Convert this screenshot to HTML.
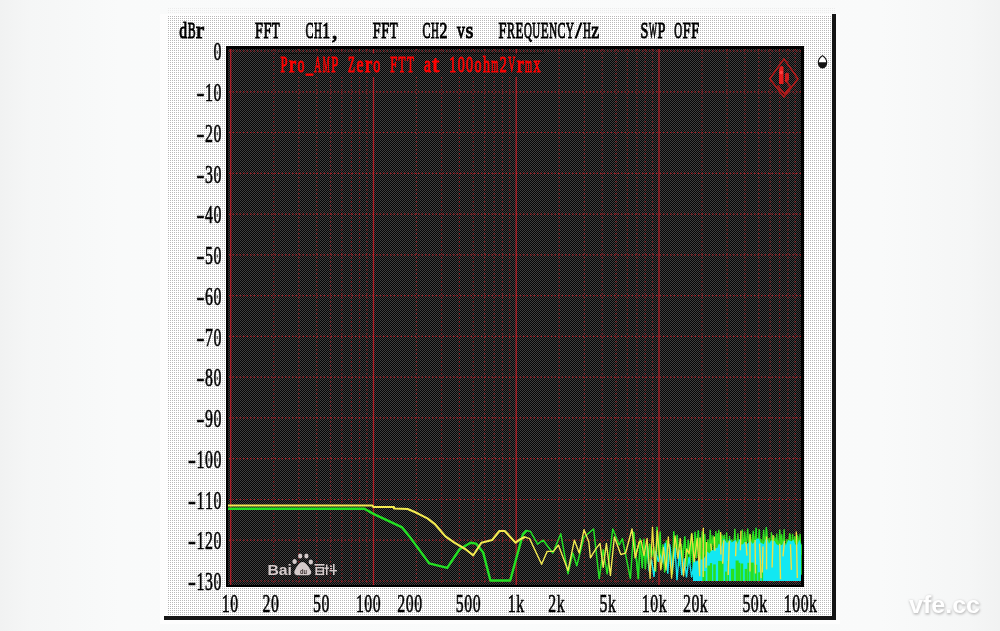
<!DOCTYPE html>
<html><head><meta charset="utf-8"><style>
html,body{margin:0;padding:0;width:1000px;height:631px;overflow:hidden;background:#f6f7f7}
.gh{stroke:#e01c28;stroke-width:1.2;stroke-dasharray:1.5 2;opacity:.7}
.gM{stroke:#e01c28;stroke-width:1.3;opacity:.75}
.gm{stroke:#e01c28;stroke-width:1.2;stroke-dasharray:1.5 2.5;opacity:.55}
.t{position:absolute;font-family:"Liberation Mono",monospace;font-weight:bold;color:#000;white-space:pre;line-height:1}
</style></head>
<body>
<svg width="1000" height="631" viewBox="0 0 1000 631" style="position:absolute;left:0;top:0">
<defs>
<pattern id="dots" width="2" height="2" patternUnits="userSpaceOnUse"><rect x="0" y="0" width="2" height="2" fill="#ffffff"/><rect x="0" y="0" width="1" height="1" fill="#b8b8b8"/></pattern>
<pattern id="dotsl" width="2" height="2" patternUnits="userSpaceOnUse"><rect x="0" y="0" width="2" height="2" fill="#fafbfb"/><rect x="0" y="0" width="1" height="1" fill="#ebebeb"/></pattern>
<pattern id="chk" width="2" height="2" patternUnits="userSpaceOnUse"><rect width="2" height="2" fill="#050505"/><rect x="0" y="0" width="1" height="1" fill="#3e3e3e"/><rect x="1" y="1" width="1" height="1" fill="#3e3e3e"/></pattern>
<linearGradient id="bg" x1="0" y1="0" x2="1" y2="0"><stop offset="0" stop-color="#f1f2f2"/><stop offset="0.03" stop-color="#f5f6f6"/><stop offset="0.12" stop-color="#f9fafa"/><stop offset="0.5" stop-color="#fafbfb"/><stop offset="0.88" stop-color="#f9fafa"/><stop offset="0.97" stop-color="#f5f6f6"/><stop offset="1" stop-color="#f1f2f2"/></linearGradient>
</defs>
<rect width="1000" height="631" fill="url(#bg)"/>
<rect x="160" y="14" width="680" height="610" fill="#fdfdfd"/>
<rect x="168" y="8" width="668" height="6" fill="url(#dotsl)"/>
<rect x="168" y="15" width="664" height="601" fill="url(#dots)" shape-rendering="crispEdges"/>
<rect x="832" y="14" width="4" height="606" fill="#161616"/>
<rect x="164" y="616" width="672" height="4" fill="#161616"/>
<rect x="226" y="46" width="578" height="541" fill="#000"/>
<rect x="228" y="49" width="573" height="536" fill="url(#chk)" shape-rendering="crispEdges"/>
<g class="grid"><line x1="229" y1="51.0" x2="802" y2="51.0" class="gh"/><line x1="229" y1="91.8" x2="802" y2="91.8" class="gh"/><line x1="229" y1="132.5" x2="802" y2="132.5" class="gh"/><line x1="229" y1="173.3" x2="802" y2="173.3" class="gh"/><line x1="229" y1="214.1" x2="802" y2="214.1" class="gh"/><line x1="229" y1="254.9" x2="802" y2="254.9" class="gh"/><line x1="229" y1="295.6" x2="802" y2="295.6" class="gh"/><line x1="229" y1="336.4" x2="802" y2="336.4" class="gh"/><line x1="229" y1="377.2" x2="802" y2="377.2" class="gh"/><line x1="229" y1="417.9" x2="802" y2="417.9" class="gh"/><line x1="229" y1="458.7" x2="802" y2="458.7" class="gh"/><line x1="229" y1="499.5" x2="802" y2="499.5" class="gh"/><line x1="229" y1="540.2" x2="802" y2="540.2" class="gh"/><line x1="229" y1="581.0" x2="802" y2="581.0" class="gh"/><line x1="230.7" y1="49" x2="230.7" y2="585" class="gM"/><line x1="273.7" y1="49" x2="273.7" y2="585" class="gm"/><line x1="298.8" y1="49" x2="298.8" y2="585" class="gm"/><line x1="316.7" y1="49" x2="316.7" y2="585" class="gm"/><line x1="330.5" y1="49" x2="330.5" y2="585" class="gm"/><line x1="341.8" y1="49" x2="341.8" y2="585" class="gm"/><line x1="351.4" y1="49" x2="351.4" y2="585" class="gm"/><line x1="359.6" y1="49" x2="359.6" y2="585" class="gm"/><line x1="366.9" y1="49" x2="366.9" y2="585" class="gm"/><line x1="373.5" y1="49" x2="373.5" y2="585" class="gM"/><line x1="416.4" y1="49" x2="416.4" y2="585" class="gm"/><line x1="441.6" y1="49" x2="441.6" y2="585" class="gm"/><line x1="459.4" y1="49" x2="459.4" y2="585" class="gm"/><line x1="473.3" y1="49" x2="473.3" y2="585" class="gm"/><line x1="484.6" y1="49" x2="484.6" y2="585" class="gm"/><line x1="494.1" y1="49" x2="494.1" y2="585" class="gm"/><line x1="502.4" y1="49" x2="502.4" y2="585" class="gm"/><line x1="509.7" y1="49" x2="509.7" y2="585" class="gm"/><line x1="516.2" y1="49" x2="516.2" y2="585" class="gM"/><line x1="559.2" y1="49" x2="559.2" y2="585" class="gm"/><line x1="584.4" y1="49" x2="584.4" y2="585" class="gm"/><line x1="602.2" y1="49" x2="602.2" y2="585" class="gm"/><line x1="616.0" y1="49" x2="616.0" y2="585" class="gm"/><line x1="627.3" y1="49" x2="627.3" y2="585" class="gm"/><line x1="636.9" y1="49" x2="636.9" y2="585" class="gm"/><line x1="645.2" y1="49" x2="645.2" y2="585" class="gm"/><line x1="652.5" y1="49" x2="652.5" y2="585" class="gm"/><line x1="659.0" y1="49" x2="659.0" y2="585" class="gM"/><line x1="702.0" y1="49" x2="702.0" y2="585" class="gm"/><line x1="727.1" y1="49" x2="727.1" y2="585" class="gm"/><line x1="745.0" y1="49" x2="745.0" y2="585" class="gm"/><line x1="758.8" y1="49" x2="758.8" y2="585" class="gm"/><line x1="770.1" y1="49" x2="770.1" y2="585" class="gm"/><line x1="779.7" y1="49" x2="779.7" y2="585" class="gm"/><line x1="787.9" y1="49" x2="787.9" y2="585" class="gm"/><line x1="795.2" y1="49" x2="795.2" y2="585" class="gm"/></g>
<rect x="278" y="53.5" width="267" height="23.5" fill="#000"/><rect x="278" y="54" width="267" height="23" fill="url(#chk)" shape-rendering="crispEdges"/>
<polyline points="228.0,508.7 364.4,508.7 373.4,513.9 402.2,527.4 409.4,536.4 429.2,563.4 447.2,567.9 459.8,549.0 470.6,542.7 476.0,543.6 483.2,552.6 490.4,580.5 510.2,580.5 522.8,534.6 526.4,530.6" fill="none" stroke="#22e022" stroke-width="2.4" stroke-linejoin="round"/>
<polyline points="522.8,534.6 526.4,530.6 530.4,531.4 537.6,544.2 543.2,540.2 552.8,553.0 560.8,533.8 568.0,573.8 572.8,553.0 576.8,565.8 584.0,537.0 593.6,529.0 599.2,578.6 603.2,549.8 607.2,573.8 612.8,529.0 619.2,545.0 622.4,538.6 630.4,578.6 633.6,532.2 638.4,578.6" fill="none" stroke="#22e022" stroke-width="1.5" stroke-linejoin="round"/>
<polyline points="633.6,532.2 638.4,578.6 640.1,538.8 642.2,567.6 643.9,539.3 645.3,568.8 647.1,543.7 648.4,563.6 649.7,544.0 651.6,557.0 653.8,547.3 655.6,571.4 657.0,527.3 658.7,557.5 660.1,532.1 661.3,567.6 663.0,544.7 664.7,572.0 666.4,540.9 668.0,563.0 670.2,547.9 672.3,573.7 673.8,531.8 675.3,557.8 677.2,535.4 679.3,565.7 681.4,544.8 682.6,561.2 684.8,536.9 686.9,565.9 688.2,540.2 690.2,562.7 691.5,534.0 693.6,575.0 695.0,532.2 696.3,557.5 698.3,530.7 700.0,567.2 701.4,542.4 702.7,572.1 704.1,535.8 705.5,562.7 707.6,543.9 709.1,578.1 710.6,535.3 712.6,572.0 713.9,547.8 715.3,562.5 717.3,533.9 718.8,557.8 720.1,539.2 721.5,571.0 723.1,536.5 725.3,568.1 727.0,545.2 728.4,559.9 730.5,544.2 732.0,560.7 733.9,546.7 735.3,579.8 737.4,539.7 739.0,558.6 740.3,547.2 741.7,573.6 743.1,544.3 744.9,563.3 746.3,542.1 747.6,561.7 749.3,544.9 751.2,563.0 753.3,531.3 754.5,562.7 756.1,528.3 757.5,565.2 759.3,529.8 760.9,578.3 763.0,540.8 764.9,570.6 766.3,527.7 767.5,578.8 769.4,547.2 770.6,571.9 772.3,542.3 773.8,581.0 775.1,538.5 777.0,578.5 779.0,541.8 780.9,578.9 782.5,541.4 784.6,577.8 786.2,543.6 788.3,570.3 790.1,535.0 791.9,571.2 793.2,540.4 795.4,578.0 797.3,535.2 799.2,570.5 800.9,544.6 801.0,574.8" fill="none" stroke="#22e022" stroke-width="1.6" stroke-linejoin="round"/>
<polyline points="646.9,540.4 649.2,571.4 651.5,559.3 654.0,576.9 655.6,550.9 658.3,561.8 659.9,554.7 662.8,561.8 665.2,542.9 667.8,573.6 669.7,544.4 672.4,571.0 675.0,547.9 677.0,580.3 679.5,549.9 681.8,575.1 684.4,558.3 686.5,577.4 689.0,557.1 691.7,577.5 694.5,559.2 697.0,571.0 699.6,556.0 700.0,568.8" fill="none" stroke="#10e8f0" stroke-width="1.4"/>
<polyline points="691.8,534.0 693.4,549.2 695.1,538.1 696.3,546.8 697.6,534.2 699.2,550.9 700.1,537.5 701.1,554.0 702.2,531.4 703.8,547.4 704.8,533.7 706.3,554.4 707.9,539.3 709.2,555.5 710.2,529.9 711.6,548.9 713.1,535.3 714.5,554.4 715.9,531.1 717.1,554.5 718.8,529.7 720.5,555.7 721.9,534.4 723.0,551.4 724.3,534.9 725.2,555.7 726.6,532.2 728.2,551.6 729.6,536.0 730.5,551.4 731.8,539.4 733.5,548.7 734.9,528.7 736.1,554.2 737.9,533.2 739.0,547.9 740.5,539.0 741.5,553.8 742.4,529.5 743.5,552.9 744.7,531.6 746.2,547.0 747.7,528.6 749.1,548.5 750.2,533.9 751.5,549.8 752.7,533.9 753.8,548.0 755.3,535.3 756.6,554.5 758.1,538.1 759.2,553.4 760.8,538.7 762.0,549.1 763.7,529.8 765.5,554.9 766.6,530.1 768.1,548.6 769.1,537.8 770.4,553.9 771.4,532.2 772.9,546.2 774.0,535.9 775.7,555.7 776.7,533.6 778.3,551.0 779.8,529.5 780.8,547.1 781.7,534.2 783.1,551.7 784.1,529.4 785.2,554.4 787.0,539.0 788.0,546.6 789.7,533.0 791.3,549.3 792.6,533.7 793.9,552.0 794.8,536.1 796.5,547.8 797.8,536.6 799.1,548.0 800.1,533.7 801.0,554.9 801.0,545.0" fill="none" stroke="#30e020" stroke-width="1.3"/>
<polygon points="693.0,581.0 693.0,566.0 694.3,563.2 695.6,561.8 697.8,560.3 699.3,559.7 701.1,559.4 703.1,559.3 705.6,556.1 707.1,551.4 709.6,553.6 711.7,549.4 713.3,550.4 715.2,548.3 717.3,548.0 718.8,543.2 721.4,546.4 723.8,538.3 725.1,540.2 726.9,543.0 728.2,542.3 729.5,538.7 731.7,542.4 733.8,541.0 735.6,539.7 737.3,544.0 739.7,538.6 741.0,544.5 743.1,544.2 744.6,541.4 746.2,544.5 747.9,543.2 750.5,540.6 752.4,544.0 754.9,541.4 756.7,538.8 759.1,538.6 760.4,542.5 762.3,543.5 763.9,544.2 765.2,539.7 767.3,538.7 769.0,543.8 771.1,540.3 772.5,540.9 774.7,540.9 776.1,543.7 778.1,545.3 780.6,545.3 782.4,544.4 784.1,540.5 785.8,545.5 788.3,540.0 790.0,540.9 791.7,541.2 793.4,539.6 795.4,544.4 797.4,544.7 799.4,539.4 801.0,545.0 801.0,581.0" fill="#12e8f2"/>

<rect x="702.4" y="571.1" width="3.3" height="9.9" fill="#28e020"/><rect x="707.4" y="565.6" width="3.3" height="15.4" fill="#28e020"/><rect x="709.9" y="563.1" width="2.2" height="17.9" fill="#28e020"/><rect x="713.2" y="564.4" width="2.6" height="16.6" fill="#28e020"/><rect x="718.1" y="560.9" width="3.4" height="20.1" fill="#28e020"/><rect x="721.0" y="561.7" width="2.5" height="19.3" fill="#28e020"/><rect x="725.0" y="571.6" width="1.9" height="9.4" fill="#28e020"/><rect x="727.5" y="560.9" width="1.6" height="20.1" fill="#28e020"/><rect x="730.9" y="568.8" width="3.4" height="12.2" fill="#28e020"/><rect x="735.6" y="560.5" width="3.1" height="20.5" fill="#28e020"/><rect x="737.9" y="562.8" width="2.3" height="18.2" fill="#28e020"/><rect x="740.6" y="563.5" width="2.6" height="17.5" fill="#28e020"/><rect x="744.7" y="568.9" width="2.5" height="12.1" fill="#28e020"/><rect x="747.4" y="562.8" width="2.0" height="18.2" fill="#28e020"/><rect x="750.3" y="562.6" width="3.5" height="18.4" fill="#28e020"/><rect x="754.5" y="564.7" width="2.8" height="16.3" fill="#28e020"/><rect x="758.2" y="572.3" width="2.0" height="8.7" fill="#28e020"/><rect x="761.6" y="563.9" width="1.5" height="17.1" fill="#28e020"/>
<polyline points="228.0,505.5 372.5,505.5 373.4,507.0 394.0,507.0 394.0,508.5 407.6,509.0 414.8,512.0 427.4,518.4 434.6,523.8 445.4,536.4 454.4,542.7 465.2,549.0 473.3,555.3 481.4,542.7 492.2,540.0 499.4,531.0 504.8,531.0 515.6,542.7 520.0,539.4 524.8,537.0" fill="none" stroke="#f2ea50" stroke-width="2.1" stroke-linejoin="round"/>
<polyline points="520.0,539.4 524.8,537.0 529.6,538.6 541.6,564.2 547.2,551.4 553.6,551.4 558.4,545.0 568.0,570.6 574.4,540.2 579.2,553.0 584.0,529.8 588.8,541.8 590.4,557.8 595.2,549.8 600.0,543.4 603.2,567.4 606.4,543.4 610.4,575.4 614.4,537.0 620.8,554.6 625.6,553.0 632.0,529.0 635.2,557.8 639.2,541.8" fill="none" stroke="#f2ea50" stroke-width="1.4" stroke-linejoin="round"/>
<polyline points="635.2,557.8 639.2,541.8 641.2,540.8 644.0,555.6 647.1,538.4 650.1,578.4 652.5,527.3 655.0,570.4 657.3,530.9 660.8,569.8 663.5,547.5 666.0,570.0 668.3,536.9 671.6,578.2 675.0,535.8 678.0,558.4 680.2,538.4 683.5,576.0 686.7,548.9 689.1,553.6 691.8,533.3 694.2,561.7 697.2,538.4 699.7,575.7 700.0,537.4" fill="none" stroke="#f0e040" stroke-width="1.3" stroke-linejoin="round"/>
<line x1="703.3" y1="527.7" x2="703.2" y2="577.1" stroke="#f0e040" stroke-width="1.4"/><line x1="706.5" y1="541.9" x2="706.1" y2="567.7" stroke="#f0e040" stroke-width="1.4"/><line x1="710.7" y1="543.6" x2="711.6" y2="550.6" stroke="#f0e040" stroke-width="1.4"/><line x1="714.2" y1="536.6" x2="714.9" y2="550.8" stroke="#f0e040" stroke-width="1.4"/><line x1="720.6" y1="532.0" x2="720.9" y2="554.4" stroke="#f0e040" stroke-width="1.4"/><line x1="723.8" y1="540.2" x2="722.7" y2="563.8" stroke="#f0e040" stroke-width="1.4"/><line x1="729.3" y1="540.8" x2="728.2" y2="575.0" stroke="#f0e040" stroke-width="1.4"/><line x1="736.1" y1="541.4" x2="735.6" y2="556.2" stroke="#f0e040" stroke-width="1.4"/><line x1="741.0" y1="530.8" x2="740.3" y2="550.3" stroke="#f0e040" stroke-width="1.4"/><line x1="745.9" y1="542.0" x2="747.0" y2="555.6" stroke="#f0e040" stroke-width="1.4"/><line x1="750.0" y1="534.3" x2="750.0" y2="571.6" stroke="#f0e040" stroke-width="1.4"/><line x1="755.1" y1="539.9" x2="755.5" y2="573.4" stroke="#f0e040" stroke-width="1.4"/><line x1="759.6" y1="543.6" x2="761.1" y2="578.1" stroke="#f0e040" stroke-width="1.4"/><line x1="763.0" y1="546.6" x2="762.3" y2="572.4" stroke="#f0e040" stroke-width="1.4"/><line x1="766.5" y1="536.5" x2="766.6" y2="569.4" stroke="#f0e040" stroke-width="1.4"/><line x1="773.1" y1="534.9" x2="772.1" y2="567.6" stroke="#f0e040" stroke-width="1.4"/><line x1="779.7" y1="543.7" x2="780.5" y2="579.3" stroke="#f0e040" stroke-width="1.4"/><line x1="784.5" y1="540.7" x2="783.0" y2="556.4" stroke="#f0e040" stroke-width="1.4"/><line x1="790.4" y1="544.2" x2="791.4" y2="569.9" stroke="#f0e040" stroke-width="1.4"/><line x1="796.3" y1="531.5" x2="797.3" y2="577.9" stroke="#f0e040" stroke-width="1.4"/>
</svg>
<svg width="1000" height="631" style="position:absolute;left:0;top:0;will-change:transform" font-family="Liberation Serif" font-size="23" font-weight="bold"><defs><filter id="blur1" x="-20%" y="-20%" width="140%" height="140%"><feGaussianBlur stdDeviation="1.2"/></filter></defs>
<text x="179.20" y="38.30" textLength="7.90" lengthAdjust="spacingAndGlyphs" fill="#000" stroke="#000" stroke-width="1.0" font-weight="normal" font-size="23.5">d</text><text x="187.63" y="38.30" textLength="7.90" lengthAdjust="spacingAndGlyphs" fill="#000" stroke="#000" stroke-width="1.0" font-weight="normal" font-size="23.5">B</text><text x="196.06" y="38.30" textLength="7.90" lengthAdjust="spacingAndGlyphs" fill="#000" stroke="#000" stroke-width="1.0" font-weight="normal" font-size="23.5">r</text><text x="255.00" y="38.30" textLength="7.90" lengthAdjust="spacingAndGlyphs" fill="#000" stroke="#000" stroke-width="1.0" font-weight="normal" font-size="23.5">F</text><text x="263.43" y="38.30" textLength="7.90" lengthAdjust="spacingAndGlyphs" fill="#000" stroke="#000" stroke-width="1.0" font-weight="normal" font-size="23.5">F</text><text x="271.86" y="38.30" textLength="7.90" lengthAdjust="spacingAndGlyphs" fill="#000" stroke="#000" stroke-width="1.0" font-weight="normal" font-size="23.5">T</text><text x="305.50" y="38.30" textLength="7.90" lengthAdjust="spacingAndGlyphs" fill="#000" stroke="#000" stroke-width="1.0" font-weight="normal" font-size="23.5">C</text><text x="313.93" y="38.30" textLength="7.90" lengthAdjust="spacingAndGlyphs" fill="#000" stroke="#000" stroke-width="1.0" font-weight="normal" font-size="23.5">H</text><text x="322.36" y="38.30" textLength="7.90" lengthAdjust="spacingAndGlyphs" fill="#000" stroke="#000" stroke-width="1.0" font-weight="normal" font-size="23.5">1</text><text x="331.80" y="38.30" textLength="5.88" lengthAdjust="spacingAndGlyphs" fill="#000" stroke="#000" stroke-width="1.0" font-weight="normal" font-size="23.5">,</text><text x="372.80" y="38.30" textLength="7.90" lengthAdjust="spacingAndGlyphs" fill="#000" stroke="#000" stroke-width="1.0" font-weight="normal" font-size="23.5">F</text><text x="381.23" y="38.30" textLength="7.90" lengthAdjust="spacingAndGlyphs" fill="#000" stroke="#000" stroke-width="1.0" font-weight="normal" font-size="23.5">F</text><text x="389.66" y="38.30" textLength="7.90" lengthAdjust="spacingAndGlyphs" fill="#000" stroke="#000" stroke-width="1.0" font-weight="normal" font-size="23.5">T</text><text x="422.60" y="38.30" textLength="7.90" lengthAdjust="spacingAndGlyphs" fill="#000" stroke="#000" stroke-width="1.0" font-weight="normal" font-size="23.5">C</text><text x="431.03" y="38.30" textLength="7.90" lengthAdjust="spacingAndGlyphs" fill="#000" stroke="#000" stroke-width="1.0" font-weight="normal" font-size="23.5">H</text><text x="439.46" y="38.30" textLength="7.90" lengthAdjust="spacingAndGlyphs" fill="#000" stroke="#000" stroke-width="1.0" font-weight="normal" font-size="23.5">2</text><text x="457.00" y="38.30" textLength="7.90" lengthAdjust="spacingAndGlyphs" fill="#000" stroke="#000" stroke-width="1.0" font-weight="normal" font-size="23.5">v</text><text x="465.43" y="38.30" textLength="7.90" lengthAdjust="spacingAndGlyphs" fill="#000" stroke="#000" stroke-width="1.0" font-weight="normal" font-size="23.5">s</text><text x="498.60" y="38.30" textLength="7.90" lengthAdjust="spacingAndGlyphs" fill="#000" stroke="#000" stroke-width="1.0" font-weight="normal" font-size="23.5">F</text><text x="507.03" y="38.30" textLength="7.90" lengthAdjust="spacingAndGlyphs" fill="#000" stroke="#000" stroke-width="1.0" font-weight="normal" font-size="23.5">R</text><text x="515.46" y="38.30" textLength="7.90" lengthAdjust="spacingAndGlyphs" fill="#000" stroke="#000" stroke-width="1.0" font-weight="normal" font-size="23.5">E</text><text x="523.89" y="38.30" textLength="7.90" lengthAdjust="spacingAndGlyphs" fill="#000" stroke="#000" stroke-width="1.0" font-weight="normal" font-size="23.5">Q</text><text x="532.32" y="38.30" textLength="7.90" lengthAdjust="spacingAndGlyphs" fill="#000" stroke="#000" stroke-width="1.0" font-weight="normal" font-size="23.5">U</text><text x="540.75" y="38.30" textLength="7.90" lengthAdjust="spacingAndGlyphs" fill="#000" stroke="#000" stroke-width="1.0" font-weight="normal" font-size="23.5">E</text><text x="549.18" y="38.30" textLength="7.90" lengthAdjust="spacingAndGlyphs" fill="#000" stroke="#000" stroke-width="1.0" font-weight="normal" font-size="23.5">N</text><text x="557.61" y="38.30" textLength="7.90" lengthAdjust="spacingAndGlyphs" fill="#000" stroke="#000" stroke-width="1.0" font-weight="normal" font-size="23.5">C</text><text x="566.04" y="38.30" textLength="7.90" lengthAdjust="spacingAndGlyphs" fill="#000" stroke="#000" stroke-width="1.0" font-weight="normal" font-size="23.5">Y</text><text x="575.16" y="38.30" textLength="6.53" lengthAdjust="spacingAndGlyphs" fill="#000" stroke="#000" stroke-width="1.0" font-weight="normal" font-size="23.5">/</text><text x="582.90" y="38.30" textLength="7.90" lengthAdjust="spacingAndGlyphs" fill="#000" stroke="#000" stroke-width="1.0" font-weight="normal" font-size="23.5">H</text><text x="591.33" y="38.30" textLength="7.90" lengthAdjust="spacingAndGlyphs" fill="#000" stroke="#000" stroke-width="1.0" font-weight="normal" font-size="23.5">z</text><text x="640.60" y="38.30" textLength="7.90" lengthAdjust="spacingAndGlyphs" fill="#000" stroke="#000" stroke-width="1.0" font-weight="normal" font-size="23.5">S</text><text x="649.03" y="38.30" textLength="7.90" lengthAdjust="spacingAndGlyphs" fill="#000" stroke="#000" stroke-width="1.0" font-weight="normal" font-size="23.5">W</text><text x="657.46" y="38.30" textLength="7.90" lengthAdjust="spacingAndGlyphs" fill="#000" stroke="#000" stroke-width="1.0" font-weight="normal" font-size="23.5">P</text><text x="674.30" y="38.30" textLength="7.90" lengthAdjust="spacingAndGlyphs" fill="#000" stroke="#000" stroke-width="1.0" font-weight="normal" font-size="23.5">O</text><text x="682.73" y="38.30" textLength="7.90" lengthAdjust="spacingAndGlyphs" fill="#000" stroke="#000" stroke-width="1.0" font-weight="normal" font-size="23.5">F</text><text x="691.16" y="38.30" textLength="7.90" lengthAdjust="spacingAndGlyphs" fill="#000" stroke="#000" stroke-width="1.0" font-weight="normal" font-size="23.5">F</text><rect x="216.65" y="50.70" width="1.4" height="3" fill="#000" opacity="0.6"/><text x="213.40" y="60.20" textLength="7.90" lengthAdjust="spacingAndGlyphs" fill="#000" stroke="#000" stroke-width="0.6" font-weight="normal" font-size="24.5">0</text><text x="196.54" y="100.97" textLength="7.90" lengthAdjust="spacingAndGlyphs" fill="#000" stroke="#000" stroke-width="0.6" font-weight="normal" font-size="24.5">-</text><text x="204.97" y="100.97" textLength="7.90" lengthAdjust="spacingAndGlyphs" fill="#000" stroke="#000" stroke-width="0.6" font-weight="normal" font-size="24.5">1</text><rect x="216.65" y="91.47" width="1.4" height="3" fill="#000" opacity="0.6"/><text x="213.40" y="100.97" textLength="7.90" lengthAdjust="spacingAndGlyphs" fill="#000" stroke="#000" stroke-width="0.6" font-weight="normal" font-size="24.5">0</text><text x="196.54" y="141.74" textLength="7.90" lengthAdjust="spacingAndGlyphs" fill="#000" stroke="#000" stroke-width="0.6" font-weight="normal" font-size="24.5">-</text><text x="204.97" y="141.74" textLength="7.90" lengthAdjust="spacingAndGlyphs" fill="#000" stroke="#000" stroke-width="0.6" font-weight="normal" font-size="24.5">2</text><rect x="216.65" y="132.24" width="1.4" height="3" fill="#000" opacity="0.6"/><text x="213.40" y="141.74" textLength="7.90" lengthAdjust="spacingAndGlyphs" fill="#000" stroke="#000" stroke-width="0.6" font-weight="normal" font-size="24.5">0</text><text x="196.54" y="182.51" textLength="7.90" lengthAdjust="spacingAndGlyphs" fill="#000" stroke="#000" stroke-width="0.6" font-weight="normal" font-size="24.5">-</text><text x="204.97" y="182.51" textLength="7.90" lengthAdjust="spacingAndGlyphs" fill="#000" stroke="#000" stroke-width="0.6" font-weight="normal" font-size="24.5">3</text><rect x="216.65" y="173.01" width="1.4" height="3" fill="#000" opacity="0.6"/><text x="213.40" y="182.51" textLength="7.90" lengthAdjust="spacingAndGlyphs" fill="#000" stroke="#000" stroke-width="0.6" font-weight="normal" font-size="24.5">0</text><text x="196.54" y="223.28" textLength="7.90" lengthAdjust="spacingAndGlyphs" fill="#000" stroke="#000" stroke-width="0.6" font-weight="normal" font-size="24.5">-</text><text x="204.97" y="223.28" textLength="7.90" lengthAdjust="spacingAndGlyphs" fill="#000" stroke="#000" stroke-width="0.6" font-weight="normal" font-size="24.5">4</text><rect x="216.65" y="213.78" width="1.4" height="3" fill="#000" opacity="0.6"/><text x="213.40" y="223.28" textLength="7.90" lengthAdjust="spacingAndGlyphs" fill="#000" stroke="#000" stroke-width="0.6" font-weight="normal" font-size="24.5">0</text><text x="196.54" y="264.05" textLength="7.90" lengthAdjust="spacingAndGlyphs" fill="#000" stroke="#000" stroke-width="0.6" font-weight="normal" font-size="24.5">-</text><text x="204.97" y="264.05" textLength="7.90" lengthAdjust="spacingAndGlyphs" fill="#000" stroke="#000" stroke-width="0.6" font-weight="normal" font-size="24.5">5</text><rect x="216.65" y="254.55" width="1.4" height="3" fill="#000" opacity="0.6"/><text x="213.40" y="264.05" textLength="7.90" lengthAdjust="spacingAndGlyphs" fill="#000" stroke="#000" stroke-width="0.6" font-weight="normal" font-size="24.5">0</text><text x="196.54" y="304.82" textLength="7.90" lengthAdjust="spacingAndGlyphs" fill="#000" stroke="#000" stroke-width="0.6" font-weight="normal" font-size="24.5">-</text><text x="204.97" y="304.82" textLength="7.90" lengthAdjust="spacingAndGlyphs" fill="#000" stroke="#000" stroke-width="0.6" font-weight="normal" font-size="24.5">6</text><rect x="216.65" y="295.32" width="1.4" height="3" fill="#000" opacity="0.6"/><text x="213.40" y="304.82" textLength="7.90" lengthAdjust="spacingAndGlyphs" fill="#000" stroke="#000" stroke-width="0.6" font-weight="normal" font-size="24.5">0</text><text x="196.54" y="345.59" textLength="7.90" lengthAdjust="spacingAndGlyphs" fill="#000" stroke="#000" stroke-width="0.6" font-weight="normal" font-size="24.5">-</text><text x="204.97" y="345.59" textLength="7.90" lengthAdjust="spacingAndGlyphs" fill="#000" stroke="#000" stroke-width="0.6" font-weight="normal" font-size="24.5">7</text><rect x="216.65" y="336.09" width="1.4" height="3" fill="#000" opacity="0.6"/><text x="213.40" y="345.59" textLength="7.90" lengthAdjust="spacingAndGlyphs" fill="#000" stroke="#000" stroke-width="0.6" font-weight="normal" font-size="24.5">0</text><text x="196.54" y="386.36" textLength="7.90" lengthAdjust="spacingAndGlyphs" fill="#000" stroke="#000" stroke-width="0.6" font-weight="normal" font-size="24.5">-</text><text x="204.97" y="386.36" textLength="7.90" lengthAdjust="spacingAndGlyphs" fill="#000" stroke="#000" stroke-width="0.6" font-weight="normal" font-size="24.5">8</text><rect x="216.65" y="376.86" width="1.4" height="3" fill="#000" opacity="0.6"/><text x="213.40" y="386.36" textLength="7.90" lengthAdjust="spacingAndGlyphs" fill="#000" stroke="#000" stroke-width="0.6" font-weight="normal" font-size="24.5">0</text><text x="196.54" y="427.13" textLength="7.90" lengthAdjust="spacingAndGlyphs" fill="#000" stroke="#000" stroke-width="0.6" font-weight="normal" font-size="24.5">-</text><text x="204.97" y="427.13" textLength="7.90" lengthAdjust="spacingAndGlyphs" fill="#000" stroke="#000" stroke-width="0.6" font-weight="normal" font-size="24.5">9</text><rect x="216.65" y="417.63" width="1.4" height="3" fill="#000" opacity="0.6"/><text x="213.40" y="427.13" textLength="7.90" lengthAdjust="spacingAndGlyphs" fill="#000" stroke="#000" stroke-width="0.6" font-weight="normal" font-size="24.5">0</text><text x="188.11" y="467.90" textLength="7.90" lengthAdjust="spacingAndGlyphs" fill="#000" stroke="#000" stroke-width="0.6" font-weight="normal" font-size="24.5">-</text><text x="196.54" y="467.90" textLength="7.90" lengthAdjust="spacingAndGlyphs" fill="#000" stroke="#000" stroke-width="0.6" font-weight="normal" font-size="24.5">1</text><rect x="208.22" y="458.40" width="1.4" height="3" fill="#000" opacity="0.6"/><text x="204.97" y="467.90" textLength="7.90" lengthAdjust="spacingAndGlyphs" fill="#000" stroke="#000" stroke-width="0.6" font-weight="normal" font-size="24.5">0</text><rect x="216.65" y="458.40" width="1.4" height="3" fill="#000" opacity="0.6"/><text x="213.40" y="467.90" textLength="7.90" lengthAdjust="spacingAndGlyphs" fill="#000" stroke="#000" stroke-width="0.6" font-weight="normal" font-size="24.5">0</text><text x="188.11" y="508.67" textLength="7.90" lengthAdjust="spacingAndGlyphs" fill="#000" stroke="#000" stroke-width="0.6" font-weight="normal" font-size="24.5">-</text><text x="196.54" y="508.67" textLength="7.90" lengthAdjust="spacingAndGlyphs" fill="#000" stroke="#000" stroke-width="0.6" font-weight="normal" font-size="24.5">1</text><text x="204.97" y="508.67" textLength="7.90" lengthAdjust="spacingAndGlyphs" fill="#000" stroke="#000" stroke-width="0.6" font-weight="normal" font-size="24.5">1</text><rect x="216.65" y="499.17" width="1.4" height="3" fill="#000" opacity="0.6"/><text x="213.40" y="508.67" textLength="7.90" lengthAdjust="spacingAndGlyphs" fill="#000" stroke="#000" stroke-width="0.6" font-weight="normal" font-size="24.5">0</text><text x="188.11" y="549.44" textLength="7.90" lengthAdjust="spacingAndGlyphs" fill="#000" stroke="#000" stroke-width="0.6" font-weight="normal" font-size="24.5">-</text><text x="196.54" y="549.44" textLength="7.90" lengthAdjust="spacingAndGlyphs" fill="#000" stroke="#000" stroke-width="0.6" font-weight="normal" font-size="24.5">1</text><text x="204.97" y="549.44" textLength="7.90" lengthAdjust="spacingAndGlyphs" fill="#000" stroke="#000" stroke-width="0.6" font-weight="normal" font-size="24.5">2</text><rect x="216.65" y="539.94" width="1.4" height="3" fill="#000" opacity="0.6"/><text x="213.40" y="549.44" textLength="7.90" lengthAdjust="spacingAndGlyphs" fill="#000" stroke="#000" stroke-width="0.6" font-weight="normal" font-size="24.5">0</text><text x="188.11" y="590.21" textLength="7.90" lengthAdjust="spacingAndGlyphs" fill="#000" stroke="#000" stroke-width="0.6" font-weight="normal" font-size="24.5">-</text><text x="196.54" y="590.21" textLength="7.90" lengthAdjust="spacingAndGlyphs" fill="#000" stroke="#000" stroke-width="0.6" font-weight="normal" font-size="24.5">1</text><text x="204.97" y="590.21" textLength="7.90" lengthAdjust="spacingAndGlyphs" fill="#000" stroke="#000" stroke-width="0.6" font-weight="normal" font-size="24.5">3</text><rect x="216.65" y="580.71" width="1.4" height="3" fill="#000" opacity="0.6"/><text x="213.40" y="590.21" textLength="7.90" lengthAdjust="spacingAndGlyphs" fill="#000" stroke="#000" stroke-width="0.6" font-weight="normal" font-size="24.5">0</text><text x="221.80" y="611.60" textLength="7.90" lengthAdjust="spacingAndGlyphs" fill="#000" stroke="#000" stroke-width="0.6" font-weight="normal" font-size="24.5">1</text><rect x="233.48" y="602.20" width="1.4" height="3" fill="#000" opacity="0.6"/><text x="230.23" y="611.60" textLength="7.90" lengthAdjust="spacingAndGlyphs" fill="#000" stroke="#000" stroke-width="0.6" font-weight="normal" font-size="24.5">0</text><text x="262.60" y="611.60" textLength="7.90" lengthAdjust="spacingAndGlyphs" fill="#000" stroke="#000" stroke-width="0.6" font-weight="normal" font-size="24.5">2</text><rect x="274.28" y="602.20" width="1.4" height="3" fill="#000" opacity="0.6"/><text x="271.03" y="611.60" textLength="7.90" lengthAdjust="spacingAndGlyphs" fill="#000" stroke="#000" stroke-width="0.6" font-weight="normal" font-size="24.5">0</text><text x="313.00" y="611.60" textLength="7.90" lengthAdjust="spacingAndGlyphs" fill="#000" stroke="#000" stroke-width="0.6" font-weight="normal" font-size="24.5">5</text><rect x="324.68" y="602.20" width="1.4" height="3" fill="#000" opacity="0.6"/><text x="321.43" y="611.60" textLength="7.90" lengthAdjust="spacingAndGlyphs" fill="#000" stroke="#000" stroke-width="0.6" font-weight="normal" font-size="24.5">0</text><text x="355.90" y="611.60" textLength="7.90" lengthAdjust="spacingAndGlyphs" fill="#000" stroke="#000" stroke-width="0.6" font-weight="normal" font-size="24.5">1</text><rect x="367.58" y="602.20" width="1.4" height="3" fill="#000" opacity="0.6"/><text x="364.33" y="611.60" textLength="7.90" lengthAdjust="spacingAndGlyphs" fill="#000" stroke="#000" stroke-width="0.6" font-weight="normal" font-size="24.5">0</text><rect x="376.01" y="602.20" width="1.4" height="3" fill="#000" opacity="0.6"/><text x="372.76" y="611.60" textLength="7.90" lengthAdjust="spacingAndGlyphs" fill="#000" stroke="#000" stroke-width="0.6" font-weight="normal" font-size="24.5">0</text><text x="397.30" y="611.60" textLength="7.90" lengthAdjust="spacingAndGlyphs" fill="#000" stroke="#000" stroke-width="0.6" font-weight="normal" font-size="24.5">2</text><rect x="408.98" y="602.20" width="1.4" height="3" fill="#000" opacity="0.6"/><text x="405.73" y="611.60" textLength="7.90" lengthAdjust="spacingAndGlyphs" fill="#000" stroke="#000" stroke-width="0.6" font-weight="normal" font-size="24.5">0</text><rect x="417.41" y="602.20" width="1.4" height="3" fill="#000" opacity="0.6"/><text x="414.16" y="611.60" textLength="7.90" lengthAdjust="spacingAndGlyphs" fill="#000" stroke="#000" stroke-width="0.6" font-weight="normal" font-size="24.5">0</text><text x="455.80" y="611.60" textLength="7.90" lengthAdjust="spacingAndGlyphs" fill="#000" stroke="#000" stroke-width="0.6" font-weight="normal" font-size="24.5">5</text><rect x="467.48" y="602.20" width="1.4" height="3" fill="#000" opacity="0.6"/><text x="464.23" y="611.60" textLength="7.90" lengthAdjust="spacingAndGlyphs" fill="#000" stroke="#000" stroke-width="0.6" font-weight="normal" font-size="24.5">0</text><rect x="475.91" y="602.20" width="1.4" height="3" fill="#000" opacity="0.6"/><text x="472.66" y="611.60" textLength="7.90" lengthAdjust="spacingAndGlyphs" fill="#000" stroke="#000" stroke-width="0.6" font-weight="normal" font-size="24.5">0</text><text x="507.80" y="611.60" textLength="7.90" lengthAdjust="spacingAndGlyphs" fill="#000" stroke="#000" stroke-width="0.6" font-weight="normal" font-size="24.5">1</text><text x="516.23" y="611.60" textLength="7.90" lengthAdjust="spacingAndGlyphs" fill="#000" stroke="#000" stroke-width="0.6" font-weight="normal" font-size="24.5">k</text><text x="548.20" y="611.60" textLength="7.90" lengthAdjust="spacingAndGlyphs" fill="#000" stroke="#000" stroke-width="0.6" font-weight="normal" font-size="24.5">2</text><text x="556.63" y="611.60" textLength="7.90" lengthAdjust="spacingAndGlyphs" fill="#000" stroke="#000" stroke-width="0.6" font-weight="normal" font-size="24.5">k</text><text x="599.50" y="611.60" textLength="7.90" lengthAdjust="spacingAndGlyphs" fill="#000" stroke="#000" stroke-width="0.6" font-weight="normal" font-size="24.5">5</text><text x="607.93" y="611.60" textLength="7.90" lengthAdjust="spacingAndGlyphs" fill="#000" stroke="#000" stroke-width="0.6" font-weight="normal" font-size="24.5">k</text><text x="641.80" y="611.60" textLength="7.90" lengthAdjust="spacingAndGlyphs" fill="#000" stroke="#000" stroke-width="0.6" font-weight="normal" font-size="24.5">1</text><rect x="653.48" y="602.20" width="1.4" height="3" fill="#000" opacity="0.6"/><text x="650.23" y="611.60" textLength="7.90" lengthAdjust="spacingAndGlyphs" fill="#000" stroke="#000" stroke-width="0.6" font-weight="normal" font-size="24.5">0</text><text x="658.66" y="611.60" textLength="7.90" lengthAdjust="spacingAndGlyphs" fill="#000" stroke="#000" stroke-width="0.6" font-weight="normal" font-size="24.5">k</text><text x="683.00" y="611.60" textLength="7.90" lengthAdjust="spacingAndGlyphs" fill="#000" stroke="#000" stroke-width="0.6" font-weight="normal" font-size="24.5">2</text><rect x="694.68" y="602.20" width="1.4" height="3" fill="#000" opacity="0.6"/><text x="691.43" y="611.60" textLength="7.90" lengthAdjust="spacingAndGlyphs" fill="#000" stroke="#000" stroke-width="0.6" font-weight="normal" font-size="24.5">0</text><text x="699.86" y="611.60" textLength="7.90" lengthAdjust="spacingAndGlyphs" fill="#000" stroke="#000" stroke-width="0.6" font-weight="normal" font-size="24.5">k</text><text x="742.40" y="611.60" textLength="7.90" lengthAdjust="spacingAndGlyphs" fill="#000" stroke="#000" stroke-width="0.6" font-weight="normal" font-size="24.5">5</text><rect x="754.08" y="602.20" width="1.4" height="3" fill="#000" opacity="0.6"/><text x="750.83" y="611.60" textLength="7.90" lengthAdjust="spacingAndGlyphs" fill="#000" stroke="#000" stroke-width="0.6" font-weight="normal" font-size="24.5">0</text><text x="759.26" y="611.60" textLength="7.90" lengthAdjust="spacingAndGlyphs" fill="#000" stroke="#000" stroke-width="0.6" font-weight="normal" font-size="24.5">k</text><text x="783.80" y="611.60" textLength="7.90" lengthAdjust="spacingAndGlyphs" fill="#000" stroke="#000" stroke-width="0.6" font-weight="normal" font-size="24.5">1</text><rect x="795.48" y="602.20" width="1.4" height="3" fill="#000" opacity="0.6"/><text x="792.23" y="611.60" textLength="7.90" lengthAdjust="spacingAndGlyphs" fill="#000" stroke="#000" stroke-width="0.6" font-weight="normal" font-size="24.5">0</text><rect x="803.91" y="602.20" width="1.4" height="3" fill="#000" opacity="0.6"/><text x="800.66" y="611.60" textLength="7.90" lengthAdjust="spacingAndGlyphs" fill="#000" stroke="#000" stroke-width="0.6" font-weight="normal" font-size="24.5">0</text><text x="809.09" y="611.60" textLength="7.90" lengthAdjust="spacingAndGlyphs" fill="#000" stroke="#000" stroke-width="0.6" font-weight="normal" font-size="24.5">k</text><text x="280.60" y="71.50" textLength="7.00" lengthAdjust="spacingAndGlyphs" fill="#ff0000" stroke="#ff0000" stroke-width="1.0" font-weight="normal" font-size="24">P</text><text x="289.03" y="71.50" textLength="7.00" lengthAdjust="spacingAndGlyphs" fill="#ff0000" stroke="#ff0000" stroke-width="1.0" font-weight="normal" font-size="24">r</text><text x="297.46" y="71.50" textLength="7.00" lengthAdjust="spacingAndGlyphs" fill="#ff0000" stroke="#ff0000" stroke-width="1.0" font-weight="normal" font-size="24">o</text><text x="305.89" y="71.50" textLength="7.00" lengthAdjust="spacingAndGlyphs" fill="#ff0000" stroke="#ff0000" stroke-width="1.0" font-weight="normal" font-size="24">_</text><text x="314.32" y="71.50" textLength="7.00" lengthAdjust="spacingAndGlyphs" fill="#ff0000" stroke="#ff0000" stroke-width="1.0" font-weight="normal" font-size="24">A</text><text x="322.75" y="71.50" textLength="7.00" lengthAdjust="spacingAndGlyphs" fill="#ff0000" stroke="#ff0000" stroke-width="1.0" font-weight="normal" font-size="24">M</text><text x="331.18" y="71.50" textLength="7.00" lengthAdjust="spacingAndGlyphs" fill="#ff0000" stroke="#ff0000" stroke-width="1.0" font-weight="normal" font-size="24">P</text><text x="348.04" y="71.50" textLength="7.00" lengthAdjust="spacingAndGlyphs" fill="#ff0000" stroke="#ff0000" stroke-width="1.0" font-weight="normal" font-size="24">Z</text><text x="356.47" y="71.50" textLength="7.00" lengthAdjust="spacingAndGlyphs" fill="#ff0000" stroke="#ff0000" stroke-width="1.0" font-weight="normal" font-size="24">e</text><text x="364.90" y="71.50" textLength="7.00" lengthAdjust="spacingAndGlyphs" fill="#ff0000" stroke="#ff0000" stroke-width="1.0" font-weight="normal" font-size="24">r</text><text x="373.33" y="71.50" textLength="7.00" lengthAdjust="spacingAndGlyphs" fill="#ff0000" stroke="#ff0000" stroke-width="1.0" font-weight="normal" font-size="24">o</text><text x="390.19" y="71.50" textLength="7.00" lengthAdjust="spacingAndGlyphs" fill="#ff0000" stroke="#ff0000" stroke-width="1.0" font-weight="normal" font-size="24">F</text><text x="398.62" y="71.50" textLength="7.00" lengthAdjust="spacingAndGlyphs" fill="#ff0000" stroke="#ff0000" stroke-width="1.0" font-weight="normal" font-size="24">T</text><text x="407.05" y="71.50" textLength="7.00" lengthAdjust="spacingAndGlyphs" fill="#ff0000" stroke="#ff0000" stroke-width="1.0" font-weight="normal" font-size="24">T</text><text x="423.91" y="71.50" textLength="7.00" lengthAdjust="spacingAndGlyphs" fill="#ff0000" stroke="#ff0000" stroke-width="1.0" font-weight="normal" font-size="24">a</text><text x="432.34" y="71.50" textLength="7.00" lengthAdjust="spacingAndGlyphs" fill="#ff0000" stroke="#ff0000" stroke-width="1.0" font-weight="normal" font-size="24">t</text><text x="449.20" y="71.50" textLength="7.00" lengthAdjust="spacingAndGlyphs" fill="#ff0000" stroke="#ff0000" stroke-width="1.0" font-weight="normal" font-size="24">1</text><text x="457.63" y="71.50" textLength="7.00" lengthAdjust="spacingAndGlyphs" fill="#ff0000" stroke="#ff0000" stroke-width="1.0" font-weight="normal" font-size="24">0</text><text x="466.06" y="71.50" textLength="7.00" lengthAdjust="spacingAndGlyphs" fill="#ff0000" stroke="#ff0000" stroke-width="1.0" font-weight="normal" font-size="24">0</text><text x="474.49" y="71.50" textLength="7.00" lengthAdjust="spacingAndGlyphs" fill="#ff0000" stroke="#ff0000" stroke-width="1.0" font-weight="normal" font-size="24">o</text><text x="482.92" y="71.50" textLength="7.00" lengthAdjust="spacingAndGlyphs" fill="#ff0000" stroke="#ff0000" stroke-width="1.0" font-weight="normal" font-size="24">h</text><text x="491.35" y="71.50" textLength="7.00" lengthAdjust="spacingAndGlyphs" fill="#ff0000" stroke="#ff0000" stroke-width="1.0" font-weight="normal" font-size="24">m</text><text x="499.78" y="71.50" textLength="7.00" lengthAdjust="spacingAndGlyphs" fill="#ff0000" stroke="#ff0000" stroke-width="1.0" font-weight="normal" font-size="24">2</text><text x="508.21" y="71.50" textLength="7.00" lengthAdjust="spacingAndGlyphs" fill="#ff0000" stroke="#ff0000" stroke-width="1.0" font-weight="normal" font-size="24">V</text><text x="516.64" y="71.50" textLength="7.00" lengthAdjust="spacingAndGlyphs" fill="#ff0000" stroke="#ff0000" stroke-width="1.0" font-weight="normal" font-size="24">r</text><text x="525.07" y="71.50" textLength="7.00" lengthAdjust="spacingAndGlyphs" fill="#ff0000" stroke="#ff0000" stroke-width="1.0" font-weight="normal" font-size="24">m</text><text x="533.50" y="71.50" textLength="7.00" lengthAdjust="spacingAndGlyphs" fill="#ff0000" stroke="#ff0000" stroke-width="1.0" font-weight="normal" font-size="24">x</text>

<g fill="none" stroke="#c81818" stroke-width="1.5" stroke-linejoin="miter" opacity="0.9">
<path d="M784,58.9 L798,78.7 L784,97.1 L769.8,78.7 Z"/>
<path d="M777.5,85.5 L784.5,94 L790.5,86.5 L785,80" stroke-width="1.5"/>
</g>
<g fill="#e81c1c">
<path d="M779,84 L779,69 Q781,64.5 783.5,67 L783.5,84 Z"/>
<path d="M785,82.5 L785,74 Q787,71 789,74 L789,80 Z" opacity="0.85"/>
</g>
<circle cx="781.2" cy="72.5" r="1.8" fill="#ff4040"/>
<g>
<path d="M822.5,55.6 C824.8,57.2 826.7,59.6 826.7,62.2 C826.7,65.4 824.8,67.8 822.5,68 C820.2,67.8 818.3,65.4 818.3,62.2 C818.3,59.6 820.2,57.2 822.5,55.6 Z" fill="#fff" stroke="#111" stroke-width="1.15"/>
<path d="M818.2,62.3 L826.8,62.3 C826.7,65.5 824.8,67.9 822.5,68.1 C820.2,67.9 818.3,65.5 818.2,62.3 Z" fill="#111"/>
</g>
<g fill="#e8dede" opacity="0.9">
<text x="267.5" y="574.5" font-family="Liberation Sans" font-weight="bold" font-size="15.5" textLength="24.5" lengthAdjust="spacingAndGlyphs">Bai</text>
<ellipse cx="294.6" cy="561.5" rx="2.2" ry="2.5"/>
<ellipse cx="300.2" cy="556" rx="2.1" ry="2.6"/>
<ellipse cx="306.4" cy="556" rx="2.1" ry="2.6"/>
<ellipse cx="310.8" cy="562" rx="2.2" ry="2.5"/>
<path d="M302.5,562 C299,562 296,568 294.5,571 C293.5,574 296,575.5 298,575.2 L307,575.2 C309.5,575.5 312,574 311,571 C309.5,568 306,562 302.5,562 Z"/>
<rect x="314.5" y="564" width="10" height="1.6"/>
<rect x="315.5" y="567" width="1.6" height="8"/><rect x="322.5" y="567" width="1.6" height="8"/>
<rect x="315.5" y="567" width="8.6" height="1.5"/><rect x="315.5" y="570.4" width="8.6" height="1.4"/><rect x="315.5" y="573.6" width="8.6" height="1.5"/>
<rect x="326" y="564.5" width="1.5" height="10.5"/><rect x="324.5" y="567.5" width="4.5" height="1.4"/>
<rect x="333" y="564" width="1.6" height="11"/><rect x="329.5" y="570" width="7.5" height="1.4"/><rect x="330" y="565.5" width="2" height="1.4"/><rect x="330" y="568" width="2" height="1.2"/>
</g>
<text x="300" y="573.6" font-family="Liberation Sans" font-weight="bold" font-size="8" fill="#3a3030" textLength="7" lengthAdjust="spacingAndGlyphs">du</text>
<g font-family="Liberation Sans" font-weight="bold" font-size="23">
<text x="909.5" y="613.8" fill="#bdbdbd" stroke="#bdbdbd" stroke-width="0.8" textLength="71" lengthAdjust="spacingAndGlyphs" filter="url(#blur1)">vfe.cc</text>
<text x="909" y="613" fill="#ffffff" textLength="71" lengthAdjust="spacingAndGlyphs">vfe.cc</text>
</g>

</svg>
</body></html>
